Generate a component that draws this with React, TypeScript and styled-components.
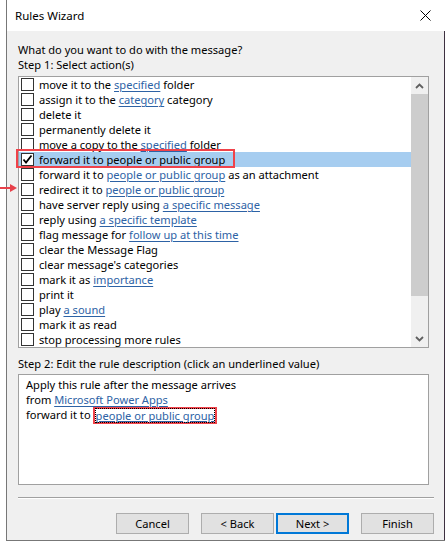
import React from 'react'
import styled, { createGlobalStyle } from 'styled-components'

const GlobalStyle = createGlobalStyle`
  html, body {
    margin: 0;
    padding: 0;
    background: #fff;
  }
  body {
    font-family: "Segoe UI", "Noto Sans", sans-serif;
    font-size: 11.1px;
    color: #000;
  }
`

const Page = styled.div`
  position: relative;
  width: 445px;
  height: 541px;
  overflow: hidden;
`

const Window = styled.div`
  margin-left: 6px;
  width: 438px;
  height: 540px;
  border-left: 1px solid #777;
  border-bottom: 1px solid #777;
  display: flex;
  flex-direction: column;
  background: #f0f0f0;
`

const TitleBar = styled.div`
  height: 31px;
  background: #fff;
  display: flex;
  align-items: center;
  justify-content: space-between;
  padding: 0 8px 0 8px;
  flex-shrink: 0;
`

const Title = styled.span`
  font-size: 11.5px;
`

const Body = styled.div`
  flex: 1;
  padding: 11px 10px 0 11px;
  border-right: 1px solid #3d3040;
  display: flex;
  flex-direction: column;
`

const Label = styled.div<{ $gap?: number }>`
  margin-top: ${p => p.$gap ?? 0}px;
  line-height: 15px;
  height: 15px;
  white-space: nowrap;
`

const ListBox = styled.div`
  margin-top: 4px;
  margin-right: 5px;
  height: 270px;
  border: 1px solid #a0a0a0;
  background: #fff;
  display: flex;
`

const Rows = styled.div`
  flex: 1;
  display: flex;
  flex-direction: column;
`

const Row = styled.div<{ $selected?: boolean }>`
  position: relative;
  height: 15px;
  line-height: 15px;
  display: flex;
  align-items: center;
  gap: 5px;
  padding-left: 2px;
  white-space: nowrap;
  background: ${p => (p.$selected ? '#a6cdf0' : 'transparent')};

  ${p =>
    p.$selected &&
    `
    &::after {
      content: '';
      position: absolute;
      left: -3px;
      top: -3px;
      width: 215px;
      height: 15px;
      border: 2px solid #f0424a;
    }
  `}
`

const Box = styled.span`
  width: 11px;
  height: 11px;
  border: 1px solid #333;
  background: #fff;
  flex-shrink: 0;
  display: flex;
  align-items: center;
  justify-content: center;
`

const Link = styled.span<{ $plain?: boolean }>`
  color: ${p => (p.$plain ? '#000' : '#2d62a5')};
  text-decoration: underline;
  text-underline-offset: 2px;
`

const Scrollbar = styled.div`
  width: 17px;
  background: #f0f0f0;
  display: flex;
  flex-direction: column;
  flex-shrink: 0;
`

const ScrollButton = styled.div`
  height: 17px;
  display: flex;
  align-items: center;
  justify-content: center;
  flex-shrink: 0;
`

const Thumb = styled.div`
  height: 202px;
  background: #cdcdcd;
`

const Track = styled.div`
  flex: 1;
`

const DescBox = styled.div`
  margin-top: 3px;
  margin-right: 5px;
  height: 105px;
  border: 1px solid #a0a0a0;
  background: #fff;
  padding: 2px 7px;
`

const DescLine = styled.div`
  line-height: 15px;
  height: 15px;
  white-space: nowrap;
`

const Marked = styled.span`
  display: inline-block;
  border: 2px solid #f0424a;
  margin-left: 2px;
  padding: 0 1px;
  line-height: 13px;
  height: 13px;
  vertical-align: top;
`

const Focused = styled.span`
  display: inline-block;
  outline: 1px dotted #000;
  line-height: 13px;
  color: #2d62a5;
  text-decoration: underline;
  text-underline-offset: 1px;
`

const Separator = styled.div`
  margin-top: 12px;
  height: 1px;
  background: #a0a0a0;
  border-bottom: 1px solid #fff;
`

const ButtonRow = styled.div`
  margin-top: 14px;
  display: flex;
  justify-content: flex-end;
`

const Button = styled.div<{ $default?: boolean; $gap?: number }>`
  width: ${p => (p.$default ? 69 : 71)}px;
  height: ${p => (p.$default ? 17 : 19)}px;
  margin-left: ${p => p.$gap ?? 0}px;
  border: ${p => (p.$default ? '2px solid #0078d7' : '1px solid #adadad')};
  background: #e1e1e1;
  display: flex;
  align-items: center;
  justify-content: center;
`

const Arrow = styled.svg`
  position: absolute;
  left: 0;
  top: 183px;
`

const actions = [
  'move it to the [specified] folder',
  'assign it to the [category] category',
  'delete it',
  'permanently delete it',
  'move a copy to the [specified] folder',
  'forward it to [people or public group]',
  'forward it to [people or public group] as an attachment',
  'redirect it to [people or public group]',
  'have server reply using [a specific message]',
  'reply using [a specific template]',
  'flag message for [follow up at this time]',
  'clear the Message Flag',
  "clear message's categories",
  'mark it as [importance]',
  'print it',
  'play [a sound]',
  'mark it as read',
  'stop processing more rules',
]

function renderText(text: string, plain?: boolean) {
  return text.split(/(\[[^\]]+\])/).filter(Boolean).map((part, i) =>
    part.startsWith('[') ? (
      <Link key={i} $plain={plain}>{part.slice(1, -1)}</Link>
    ) : (
      <span key={i}>{part}</span>
    )
  )
}

const Check = () => (
  <svg width="11" height="11" viewBox="0 0 11 11">
    <path d="M1.5 5.5 L4 8.5 L9.5 1.5" fill="none" stroke="#000" strokeWidth="1.8" />
  </svg>
)

const Chevron = ({ up }: { up?: boolean }) => (
  <svg width="9" height="6" viewBox="0 0 9 6">
    <polyline
      points={up ? '1,5 4.5,1.5 8,5' : '1,1 4.5,4.5 8,1'}
      fill="none"
      stroke="#606060"
      strokeWidth="1.8"
    />
  </svg>
)

export default function App() {
  return (
    <Page>
      <GlobalStyle />
      <Window>
        <TitleBar>
          <Title>Rules Wizard</Title>
          <svg width="11" height="11" viewBox="0 0 11 11" style={{ marginRight: 6 }}>
            <path d="M0.5 0.5 L10.5 10.5 M10.5 0.5 L0.5 10.5" stroke="#000" strokeWidth="1" />
          </svg>
        </TitleBar>
        <Body>
          <Label>What do you want to do with the message?</Label>
          <Label>Step 1: Select action(s)</Label>
          <ListBox>
            <Rows>
              {actions.map((a, i) => (
                <Row key={i} $selected={i === 5}>
                  <Box>{i === 5 && <Check />}</Box>
                  <span>{renderText(a, i === 5)}</span>
                </Row>
              ))}
            </Rows>
            <Scrollbar>
              <ScrollButton>
                <Chevron up />
              </ScrollButton>
              <Thumb />
              <Track />
              <ScrollButton>
                <Chevron />
              </ScrollButton>
            </Scrollbar>
          </ListBox>
          <Label $gap={8}>Step 2: Edit the rule description (click an underlined value)</Label>
          <DescBox>
            <DescLine>Apply this rule after the message arrives</DescLine>
            <DescLine>from {renderText('[Microsoft Power Apps]')}</DescLine>
            <DescLine>
              forward it to
              <Marked>
                <Focused>people or public group</Focused>
              </Marked>
            </DescLine>
          </DescBox>
          <Separator />
          <ButtonRow>
            <Button>Cancel</Button>
            <Button $gap={12}>&lt; Back</Button>
            <Button $default $gap={2}>Next &gt;</Button>
            <Button $gap={12}>Finish</Button>
          </ButtonRow>
        </Body>
      </Window>
      <Arrow width="18" height="10" viewBox="0 0 18 10">
        <path d="M0 5 H12" stroke="#e8404a" strokeWidth="2" />
        <path d="M10 1 L17 5 L10 9 Z" fill="#e8404a" />
      </Arrow>
    </Page>
  )
}
